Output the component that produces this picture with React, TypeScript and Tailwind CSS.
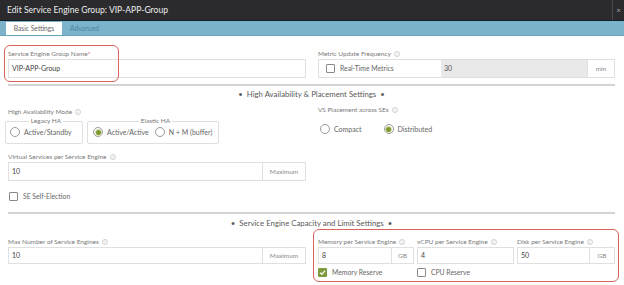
import type { ReactNode } from "react";

function Info() {
  return (
    <svg width="6" height="6" viewBox="0 0 10 10" className="ml-[3px] inline-block">
      <circle cx="5" cy="5" r="4.2" fill="none" stroke="#c2c2c2" strokeWidth="1.3" />
      <rect x="4.4" y="4.2" width="1.2" height="3.2" fill="#c2c2c2" />
      <rect x="4.4" y="2.4" width="1.2" height="1.1" fill="#c2c2c2" />
    </svg>
  );
}

function Radio({ checked, label }: { checked?: boolean; label: string }) {
  return (
    <div className="flex items-center gap-[4px] whitespace-nowrap">
      <span className="flex h-[10px] w-[10px] items-center justify-center rounded-full border border-[#9a9a9a] bg-white">
        {checked && <span className="h-[5px] w-[5px] rounded-full bg-[#7f9a35] ring-1 ring-[#d5e0b0]" />}
      </span>
      <span className="text-[7px] text-[#666]">{label}</span>
    </div>
  );
}

function Checkbox({ checked, label }: { checked?: boolean; label: string }) {
  return (
    <div className="flex items-center gap-[5px] whitespace-nowrap">
      {checked ? (
        <span className="flex h-[9px] w-[9px] items-center justify-center rounded-[1px] bg-[#7d9b3b]">
          <svg width="7" height="7" viewBox="0 0 10 10">
            <path d="M1.5 5.2 L4 7.6 L8.6 2.4" fill="none" stroke="white" strokeWidth="1.8" />
          </svg>
        </span>
      ) : (
        <span className="h-[9px] w-[9px] rounded-[1px] border border-[#8a8a8a] bg-white" />
      )}
      <span className="text-[6.8px] text-[#666]">{label}</span>
    </div>
  );
}

function Label({ children, info = true }: { children: ReactNode; info?: boolean }) {
  return (
    <div className="flex h-[10px] items-center whitespace-nowrap text-[6.5px] text-[#7a7a7a]">
      {children}
      {info && <Info />}
    </div>
  );
}

function Input({ value, addon, addonW = "w-[43px]", h = "h-[19px]" }: { value: string; addon?: string; addonW?: string; h?: string }) {
  return (
    <div className={`flex ${h} w-full border border-[#e0e0e0] bg-white`}>
      <div className="flex flex-1 items-center pl-[3px] text-[7px] text-[#444]">{value}</div>
      {addon && (
        <div className={`flex ${addonW} items-center justify-center border-l border-[#e0e0e0] text-[6.5px] text-[#888]`}>{addon}</div>
      )}
    </div>
  );
}

function SectionHead({ title, h = "h-[17px]" }: { title: string; h?: string }) {
  return (
    <div>
      <div className="h-[2px] bg-[#d4d4d4]" />
      <div className={`flex ${h} items-center justify-center whitespace-pre text-[7.8px] text-[#5a5a5a]`}>
        {"•  " + title + "  •"}
      </div>
    </div>
  );
}

export default function App() {
  return (
    <div className="relative h-[285px] w-[624px] overflow-hidden bg-white font-['Lato',sans-serif]">
      <header className="flex h-[20px] items-center justify-between bg-[#2b2b2d]">
        <span className="pl-[7px] text-[8.6px] text-[#ececec]">Edit Service Engine Group: VIP-APP-Group</span>
        <div className="flex h-full w-[12px] items-center justify-center border-l border-[#4a4a4c] text-[8px] text-[#aaa]">×</div>
      </header>
      <div className="h-[1px] bg-[#15202a]" />
      <nav className="flex h-[15px] items-end gap-[8px] border-b border-[#6aa2b9] bg-[#7ab3ca] pl-[6px]">
        <div className="flex h-[13px] w-[56px] items-center justify-center bg-white text-[6.7px] text-[#666]">Basic Settings</div>
        <div className="flex h-[13px] items-center text-[6.7px] text-[#4a86a4]">Advanced</div>
      </nav>

      <main className="pl-[8px] pr-[9px]">
        <div className="flex gap-[12px] pt-[13px]">
          <div className="w-[298px]">
            <div className="flex h-[10px] items-center text-[6.5px] text-[#7a7a7a]">
              Service Engine Group Name<span className="text-[#d23a3a]">*</span>
            </div>
            <Input value="VIP-APP-Group" />
          </div>
          <div className="w-[297px]">
            <Label>Metric Update Frequency</Label>
            <div className="flex h-[19px] border border-[#e0e0e0]">
              <div className="flex w-[122px] items-center pl-[7px]">
                <Checkbox label="Real-Time Metrics" />
              </div>
              <div className="flex flex-1 items-center bg-[#e9e9e9] pl-[3px] text-[7px] text-[#555]">30</div>
              <div className="flex w-[27px] items-center justify-center border-l border-[#e0e0e0] text-[6.5px] text-[#888]">min</div>
            </div>
          </div>
        </div>

        <div className="mt-[6px] w-[607px]">
          <SectionHead title="High Availability & Placement Settings" />
        </div>

        <div className="flex gap-[12px] pt-[4px]">
          <div className="w-[298px]">
            <Label>High Availability Mode</Label>
            <div className="-ml-[3px] flex gap-[4px]">
              <fieldset className="h-[27px] w-[78px] rounded-[2px] border border-[#e0e0e0] pl-[4px]">
                <legend className="mx-auto px-[2px] text-[6.5px] leading-[8px] text-[#777]">Legacy HA</legend>
                <div className="pt-[2px]">
                  <Radio label="Active/Standby" />
                </div>
              </fieldset>
              <fieldset className="h-[27px] w-[132px] rounded-[2px] border border-[#e0e0e0] pl-[5px]">
                <legend className="mx-auto px-[2px] text-[6.5px] leading-[8px] text-[#777]">Elastic HA</legend>
                <div className="flex gap-[6px] pt-[2px]">
                  <Radio checked label="Active/Active" />
                  <Radio label="N + M (buffer)" />
                </div>
              </fieldset>
            </div>
          </div>
          <div className="w-[297px]">
            <div className="-mt-[2px]">
              <Label>VS Placement across SEs</Label>
            </div>
            <div className="flex gap-[22px] pl-[2px] pt-[9px]">
              <Radio label="Compact" />
              <Radio checked label="Distributed" />
            </div>
          </div>
        </div>

        <div className="w-[298px] pt-[8px]">
          <Label>Virtual Services per Service Engine</Label>
          <Input value="10" addon="Maximum" />
        </div>

        <div className="pl-[1px] pt-[10px]">
          <Checkbox label="SE Self-Election" />
        </div>

        <div className="mt-[11px] w-[607px]">
          <SectionHead title="Service Engine Capacity and Limit Settings" h="h-[19px]" />
        </div>

        <div className="flex gap-[12px] pt-[4px]">
          <div className="w-[298px]">
            <Label>Max Number of Service Engines</Label>
            <Input value="10" addon="Maximum" h="h-[17px]" />
          </div>
          <div className="w-[297px]">
            <div className="flex gap-[3px]">
              <div className="w-[96px]">
                <Label>Memory per Service Engine</Label>
                <Input value="8" addon="GB" addonW="w-[22px]" h="h-[17px]" />
              </div>
              <div className="w-[97px]">
                <Label>vCPU per Service Engine</Label>
                <Input value="4" h="h-[17px]" />
              </div>
              <div className="w-[98px]">
                <Label>Disk per Service Engine</Label>
                <Input value="50" addon="GB" addonW="w-[25px]" h="h-[17px]" />
              </div>
            </div>
            <div className="flex pt-[3px]">
              <div className="w-[99px]">
                <Checkbox checked label="Memory Reserve" />
              </div>
              <Checkbox label="CPU Reserve" />
            </div>
          </div>
        </div>
      </main>

      <div className="pointer-events-none absolute left-[4px] top-[45px] h-[37px] w-[115px] rounded-[6px] border-[1.5px] border-[#d9655a]" />
      <div className="pointer-events-none absolute left-[313px] top-[229px] h-[53px] w-[306px] rounded-[6px] border-[1.5px] border-[#d9655a]" />
    </div>
  );
}
